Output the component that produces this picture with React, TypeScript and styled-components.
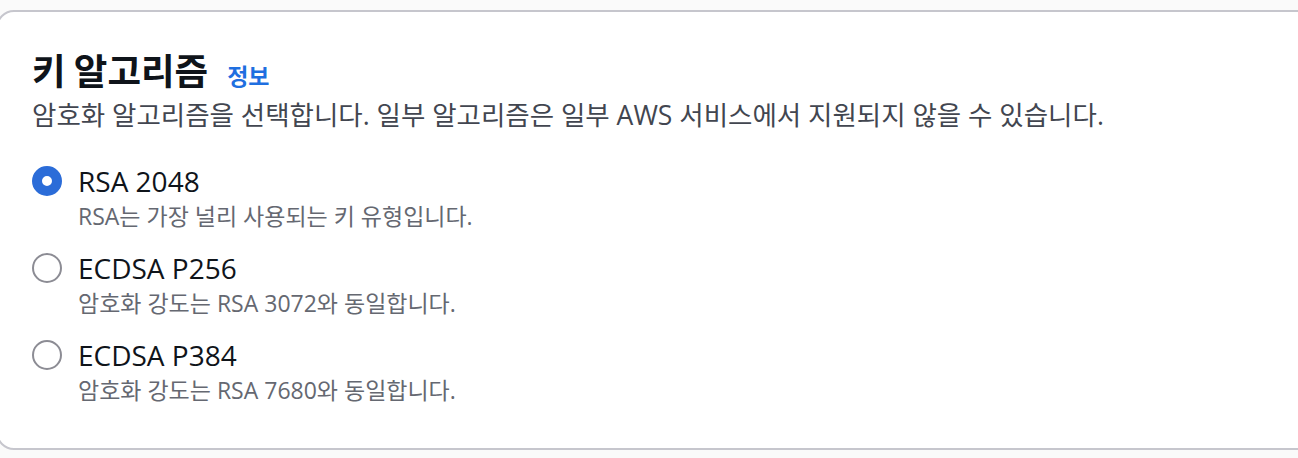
import React, { useState } from "react";
import styled, { createGlobalStyle } from "styled-components";

const GlobalStyle = createGlobalStyle`
  html, body {
    margin: 0;
    padding: 0;
    background: #fafafa;
    overflow: hidden;
  }
  body {
    font-family: "Open Sans", "Noto Sans CJK KR", sans-serif;
    -webkit-font-smoothing: antialiased;
  }
`;

const Page = styled.div`
  width: 1298px;
  height: 458px;
  overflow: hidden;
  padding-top: 10px;
  box-sizing: border-box;
`;

const Container = styled.section`
  margin-left: -4px;
  width: 1330px;
  height: 440px;
  box-sizing: border-box;
  background: #ffffff;
  border: 2px solid #c6c6cd;
  border-radius: 18px;
  padding: 36px 36px 0 34px;
`;

const HeaderRow = styled.div`
  display: flex;
  align-items: baseline;
  gap: 19px;
`;

const Title = styled.h2`
  margin: 0;
  font-family: "Noto Sans CJK KR", sans-serif;
  font-size: 36.5px;
  line-height: 44px;
  font-weight: 700;
  color: #0f141a;
`;

const InfoLink = styled.a`
  font-family: "Noto Sans CJK KR", sans-serif;
  font-size: 23px;
  font-weight: 700;
  color: #1f6fe0;
  text-decoration: none;
  cursor: pointer;
`;

const Description = styled.p`
  margin: 5px 0 0;
  font-family: "Open Sans", "Noto Sans CJK KR", sans-serif;
  font-size: 26.5px;
  line-height: 36px;
  color: #424650;
`;

const Group = styled.div`
  display: flex;
  flex-direction: column;
  gap: 17px;
  margin-top: 28px;
`;

const Option = styled.label`
  display: grid;
  grid-template-columns: 30px 1fr;
  column-gap: 16px;
  cursor: pointer;
`;

const Circle = styled.span<{ $checked: boolean }>`
  width: 30px;
  height: 30px;
  box-sizing: border-box;
  border-radius: 50%;
  margin-top: 5px;
  border: ${(p) => (p.$checked ? "10px solid #2b6cd8" : "2px solid #8c8c94")};
  background: #ffffff;
`;

const Texts = styled.span`
  display: flex;
  flex-direction: column;
`;

const Label = styled.span`
  font-family: "Open Sans", "Noto Sans CJK KR", sans-serif;
  font-size: 28px;
  line-height: 40px;
  color: #0f141a;
`;

const OptionDescription = styled.span`
  font-family: "Open Sans", "Noto Sans CJK KR", sans-serif;
  font-size: 23px;
  line-height: 30px;
  color: #656871;
`;

const HiddenInput = styled.input`
  position: absolute;
  opacity: 0;
  width: 0;
  height: 0;
`;

const options = [
  { value: "RSA_2048", label: "RSA 2048", description: "RSA는 가장 널리 사용되는 키 유형입니다." },
  { value: "ECDSA_P256", label: "ECDSA P256", description: "암호화 강도는 RSA 3072와 동일합니다." },
  { value: "ECDSA_P384", label: "ECDSA P384", description: "암호화 강도는 RSA 7680와 동일합니다." },
];

export default function App() {
  const [value, setValue] = useState("RSA_2048");
  return (
    <>
      <GlobalStyle />
      <Page>
        <Container>
          <HeaderRow>
            <Title>키 알고리즘</Title>
            <InfoLink>정보</InfoLink>
          </HeaderRow>
          <Description>
            암호화 알고리즘을 선택합니다. 일부 알고리즘은 일부 AWS 서비스에서 지원되지 않을 수 있습니다.
          </Description>
          <Group role="radiogroup">
            {options.map((o) => (
              <Option key={o.value}>
                <HiddenInput
                  type="radio"
                  name="key-algorithm"
                  value={o.value}
                  checked={value === o.value}
                  onChange={() => setValue(o.value)}
                />
                <Circle $checked={value === o.value} />
                <Texts>
                  <Label>{o.label}</Label>
                  <OptionDescription>{o.description}</OptionDescription>
                </Texts>
              </Option>
            ))}
          </Group>
        </Container>
      </Page>
    </>
  );
}
